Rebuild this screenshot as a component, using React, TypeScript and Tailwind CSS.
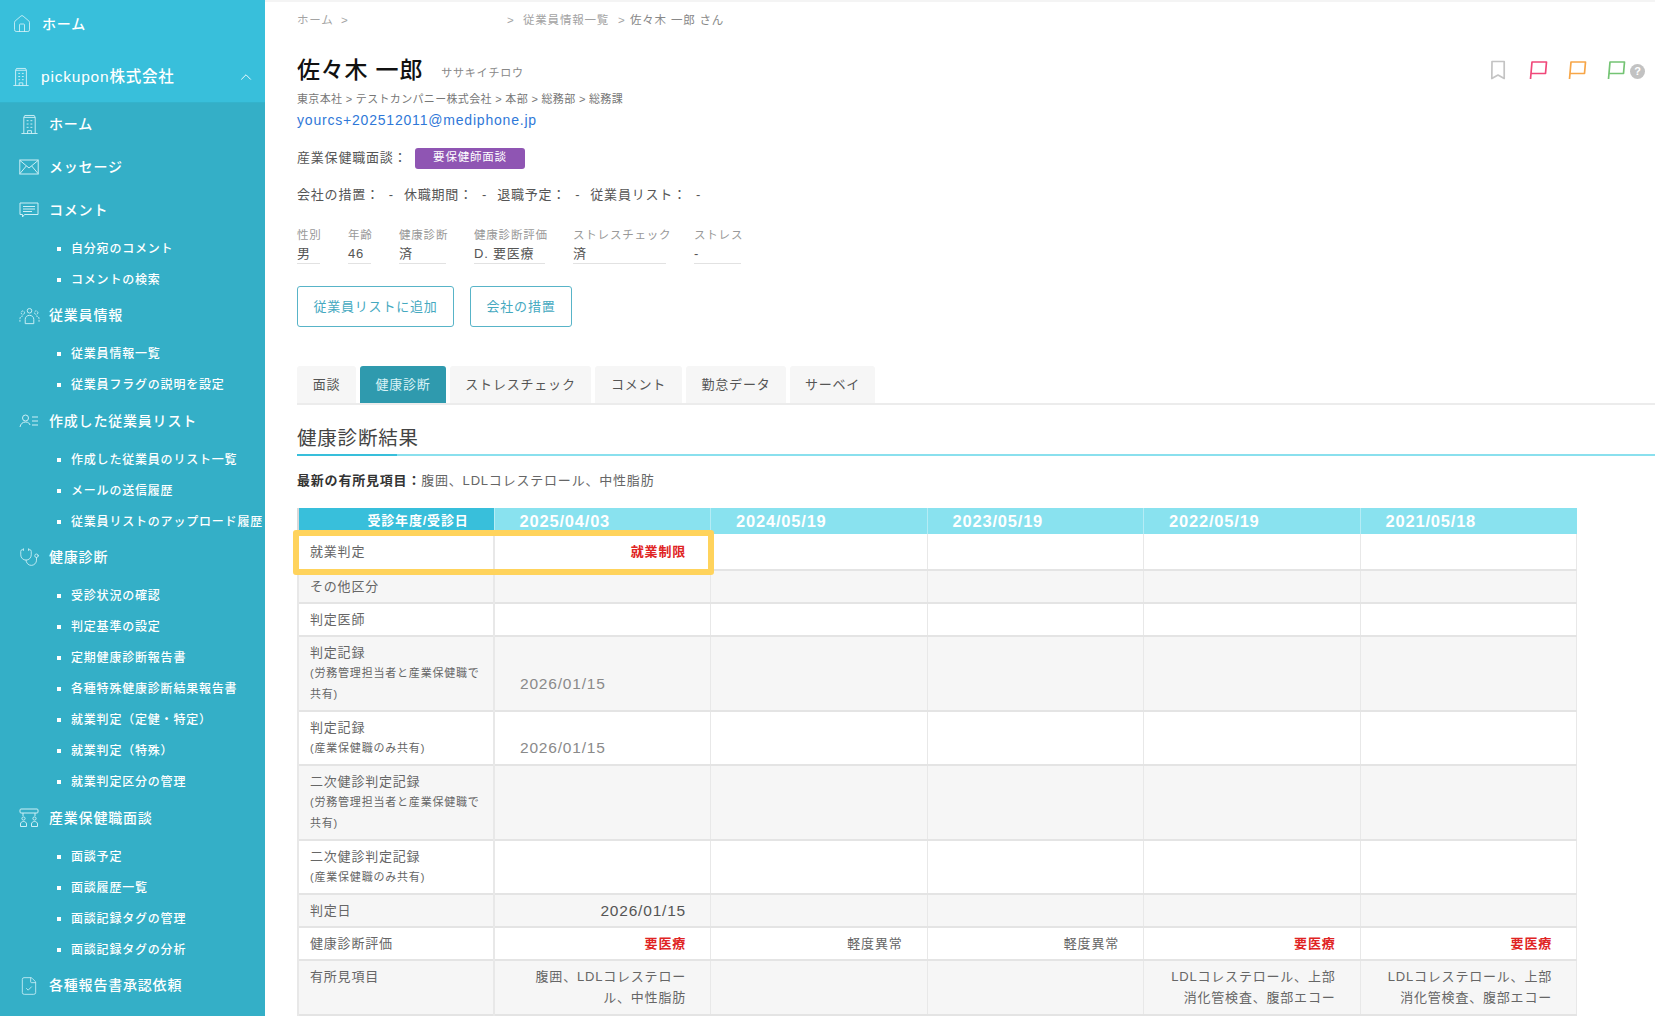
import type { ReactNode } from 'react';
import { ChevronUp, FileCheck, House, Stethoscope } from 'lucide-react';

type IconProps = { className?: string };

const BuildingIcon = ({ className }: IconProps) => (
  <svg viewBox="0 0 20 22" fill="none" stroke="currentColor" strokeWidth="1" className={className}>
    <path d="M4 20.5V3.5h12v17M1.5 20.5h17M4 3.5l1-2h10l1 2" />
    <path d="M7 7h2M11 7h2M7 10.5h2M11 10.5h2M7 14h2M11 14h2M8 20.5v-3h4v3" />
  </svg>
);

const MailIcon = ({ className }: IconProps) => (
  <svg viewBox="0 0 20 16" fill="none" stroke="currentColor" strokeWidth="1" className={className}>
    <rect x="0.8" y="1" width="18.4" height="14" />
    <path d="M1 1.5l9 7.5 9-7.5M1 14.5l6.3-7.5M19 14.5L12.7 7" />
  </svg>
);

const CommentIcon = ({ className }: IconProps) => (
  <svg viewBox="0 0 20 16" fill="none" stroke="currentColor" strokeWidth="1" className={className}>
    <path d="M1 1h18v11.5H5.5L3.5 15v-2.5H1z" />
    <path d="M4 4.5h12M4 7h12M4 9.5h9" />
  </svg>
);

const PeopleIcon = ({ className }: IconProps) => (
  <svg viewBox="0 0 22 18" fill="none" stroke="currentColor" strokeWidth="1" className={className}>
    <circle cx="11" cy="3.5" r="2.4" />
    <path d="M6.5 17v-4.5c0-2.5 2-4.2 4.5-4.2s4.500 1.700 4.500 4.200V17z" />
    <circle cx="4" cy="5.500" r="1.800" strokeDasharray="2 1" />
    <circle cx="18" cy="5.500" r="1.800" strokeDasharray="2 1" />
    <path d="M1 15v-3c0-1.800 1.200-3 3-3M21 15v-3c0-1.800-1.200-3-3-3" strokeDasharray="2 1" />
  </svg>
);

const ListUserIcon = ({ className }: IconProps) => (
  <svg viewBox="0 0 20 14" fill="none" stroke="currentColor" strokeWidth="1" className={className}>
    <circle cx="6.500" cy="4" r="3" />
    <path d="M1 13c.5-3 2.500-5 5.500-5s4 1.500 4.500 3" />
    <path d="M13 3h6M13 7h6M13 11h6" />
  </svg>
);

const InterviewIcon = ({ className }: IconProps) => (
  <svg viewBox="0 0 20 20" fill="none" stroke="currentColor" strokeWidth="1" className={className}>
    <rect x="1" y="1" width="18" height="4" rx="1" />
    <path d="M4 5v3M16 5v3" />
    <circle cx="4.500" cy="10.500" r="1.600" />
    <circle cx="15.500" cy="10.500" r="1.600" />
    <path d="M1.500 18.500v-2.500c0-1.500 1.300-2.500 3-2.500s3 1 3 2.500v2.500zM12.500 18.500v-2.500c0-1.500 1.300-2.500 3-2.500s3 1 3 2.500v2.500z" />
  </svg>
);

const BookmarkIcon = () => (
  <svg viewBox="0 0 16 20" fill="none" stroke="#c4c4c4" strokeWidth="1.700" className="w-[16px] h-[20px]">
    <path d="M2 1.500h12.200v17L8 15l-6.200 3.500z" strokeLinejoin="round" />
  </svg>
);

const FlagIcon = ({ color }: { color: string }) => (
  <svg viewBox="0 0 19 20" fill="none" stroke={color} strokeWidth="1.700" className="w-[19px] h-[20px]">
    <path d="M1.500 19L3 2h14.500l-1 11.500H2.200" strokeLinejoin="round" />
  </svg>
);

type NavGroup = {
  label: string;
  icon: ReactNode;
  subs?: string[];
};

const navGroups: NavGroup[] = [
  { label: 'ホーム', icon: <BuildingIcon className="w-[19px] h-[21px] ml-[1px]" /> },
  { label: 'メッセージ', icon: <MailIcon className="w-[20px] h-[16px]" /> },
  {
    label: 'コメント',
    icon: <CommentIcon className="w-[20px] h-[16px]" />,
    subs: ['自分宛のコメント', 'コメントの検索'],
  },
  {
    label: '従業員情報',
    icon: <PeopleIcon className="w-[21px] h-[18px]" />,
    subs: ['従業員情報一覧', '従業員フラグの説明を設定'],
  },
  {
    label: '作成した従業員リスト',
    icon: <ListUserIcon className="w-[20px] h-[14px]" />,
    subs: ['作成した従業員のリスト一覧', 'メールの送信履歴', '従業員リストのアップロード履歴'],
  },
  {
    label: '健康診断',
    icon: <Stethoscope className="w-[21px] h-[21px]" strokeWidth={1} />,
    subs: [
      '受診状況の確認',
      '判定基準の設定',
      '定期健康診断報告書',
      '各種特殊健康診断結果報告書',
      '就業判定（定健・特定）',
      '就業判定（特殊）',
      '就業判定区分の管理',
    ],
  },
  {
    label: '産業保健職面談',
    icon: <InterviewIcon className="w-[20px] h-[20px]" />,
    subs: ['面談予定', '面談履歴一覧', '面談記録タグの管理', '面談記録タグの分析'],
  },
  {
    label: '各種報告書承認依頼',
    icon: <FileCheck className="w-[20px] h-[22px]" strokeWidth={1} />,
  },
];

function Sidebar() {
  return (
    <aside className="w-[265px] shrink-0 h-full bg-[#34afc7] text-white overflow-hidden">
      <div className="h-[103px] bg-[#38bfdb] border-b border-[#33b3cc] px-[12px] text-[14px] font-medium">
        <div className="h-[48px] flex items-center gap-[10px]">
          <House className="w-[20px] h-[20px] text-[#d5f2f8]" strokeWidth={1} />
          <span>ホーム</span>
        </div>
        <div className="h-[54px] pt-[4px] flex items-center gap-[11px]">
          <BuildingIcon className="w-[18px] h-[20px] text-[#d5f2f8]" />
          <span className="text-[15.500px]">pickupon株式会社</span>
          <ChevronUp className="ml-auto mr-[-2px] w-[18px] h-[18px]" strokeWidth={1.2} />
        </div>
      </div>
      <nav className="pt-[3px] pl-[19px]">
        {navGroups.map((g) => (
          <div key={g.label} className={g.subs ? 'mb-[2.500px]' : 'mb-[7px]'}>
            <div className="h-[36px] flex items-center text-[14px] font-medium">
              <span className="w-[30px] shrink-0 text-[#cdeff6]">{g.icon}</span>
              <span>{g.label}</span>
            </div>
            {g.subs && (
              <ul className="pt-[5px]">
                {g.subs.map((s) => (
                  <li key={s} className="h-[31px] pl-[38px] flex items-center text-[12px] font-medium whitespace-nowrap">
                    <span className="w-[4px] h-[4px] bg-white mr-[10px] shrink-0" />
                    {s}
                  </li>
                ))}
              </ul>
            )}
          </div>
        ))}
      </nav>
    </aside>
  );
}

const stats = [
  { label: '性別', value: '男', w: 'w-[23px]' },
  { label: '年齢', value: '46', w: 'w-[23px]' },
  { label: '健康診断', value: '済', w: 'w-[47px]' },
  { label: '健康診断評価', value: 'D. 要医療', w: 'w-[71px]' },
  { label: 'ストレスチェック', value: '済', w: 'w-[93px]' },
  { label: 'ストレス', value: '-', w: 'w-[47px]' },
];

const tabs = [
  { label: '面談', w: 'w-[59px]' },
  { label: '健康診断', w: 'w-[86px]', active: true },
  { label: 'ストレスチェック', w: 'w-[141px]' },
  { label: 'コメント', w: 'w-[87px]' },
  { label: '勤怠データ', w: 'w-[100px]' },
  { label: 'サーベイ', w: 'w-[85px]' },
];

const measures = ['会社の措置', '休職期間', '退職予定', '従業員リスト'];

const dates = ['2025/04/03', '2024/05/19', '2023/05/19', '2022/05/19', '2021/05/18'];

type Row = {
  h: string;
  label: ReactNode;
  cells?: ReactNode[];
  shaded?: boolean;
  top?: boolean;
};

const small = 'block text-[11px] leading-[21px]';
const red = 'text-[#e02424] font-bold';

const rows: Row[] = [
  {
    h: 'h-[36px]',
    label: '就業判定',
    cells: [<span className={red}>就業制限</span>],
  },
  { h: 'h-[33px]', label: 'その他区分', shaded: true },
  { h: 'h-[33px]', label: '判定医師' },
  {
    h: 'h-[75px]',
    shaded: true,
    top: true,
    label: (
      <>
        判定記録
        <span className={small}>(労務管理担当者と産業保健職で<br />共有)</span>
      </>
    ),
    cells: [<span className="block text-left text-[15.500px] text-[#8a8a8a] pt-[31px]">2026/01/15</span>],
  },
  {
    h: 'h-[54px]',
    top: true,
    label: (
      <>
        判定記録
        <span className={small}>(産業保健職のみ共有)</span>
      </>
    ),
    cells: [<span className="block text-left text-[15.500px] text-[#8a8a8a] pt-[20px]">2026/01/15</span>],
  },
  {
    h: 'h-[75px]',
    shaded: true,
    top: true,
    label: (
      <>
        二次健診判定記録
        <span className={small}>(労務管理担当者と産業保健職で<br />共有)</span>
      </>
    ),
  },
  {
    h: 'h-[54px]',
    top: true,
    label: (
      <>
        二次健診判定記録
        <span className={small}>(産業保健職のみ共有)</span>
      </>
    ),
  },
  {
    h: 'h-[33px]',
    shaded: true,
    label: '判定日',
    cells: [<span className="text-[15.500px] text-[#555]">2026/01/15</span>],
  },
  {
    h: 'h-[33px]',
    label: '健康診断評価',
    cells: [
      <span className={red}>要医療</span>,
      '軽度異常',
      '軽度異常',
      <span className={red}>要医療</span>,
      <span className={red}>要医療</span>,
    ],
  },
  {
    h: 'h-[55px]',
    shaded: true,
    top: true,
    label: '有所見項目',
    cells: [
      <>腹囲、LDLコレステロー<br />ル、中性脂肪</>,
      '',
      '',
      <>LDLコレステロール、上部<br />消化管検査、腹部エコー</>,
      <>LDLコレステロール、上部<br />消化管検査、腹部エコー</>,
    ],
  },
];

function ResultTable() {
  return (
    <div className="relative mt-[16px] w-[1280px]">
      <table className="w-full table-fixed border-collapse text-[13px] text-[#666]">
        <colgroup>
          <col className="w-[196px]" />
          <col />
          <col />
          <col />
          <col />
          <col />
        </colgroup>
        <thead>
          <tr className="h-[26px]">
            <th className="bg-[#38bfdb] text-white text-[13px] font-bold text-right pr-[25px] border-l-2 border-[#d9d9d9]">
              受診年度/受診日
            </th>
            {dates.map((d) => (
              <th key={d} className="bg-[#89e2ef] text-white text-[16.500px] font-bold text-left pl-[25px] border-l border-[#b5ecf5]">
                {d}
              </th>
            ))}
          </tr>
        </thead>
        <tbody>
          {rows.map((r, i) => (
            <tr key={i} className={`${r.h} ${r.shaded ? 'bg-[#f6f6f6]' : 'bg-white'} border-b-2 border-[#e4e4e4]`}>
              <td className={`pl-[11px] border-l-2 border-r-2 border-[#e8e8e8] ${r.top ? 'align-top pt-[6px]' : ''}`}>
                {r.label}
              </td>
              {dates.map((d, c) => (
                <td
                  key={d}
                  className={`border-r border-[#e8e8e8] text-right text-[13px] leading-[21px] pr-[24px] pl-[25px] ${r.top ? 'align-top pt-[5px]' : ''}`}
                >
                  {r.cells?.[c]}
                </td>
              ))}
            </tr>
          ))}
        </tbody>
      </table>
      <div className="absolute left-[-4px] top-[22px] w-[421px] h-[45px] border-[6px] border-[#ffd35c] rounded-[3px]" />
    </div>
  );
}

function Main() {
  return (
    <main className="flex-1 min-w-0 h-full overflow-hidden border-t-2 border-[#f4f4f4] pl-[32px] text-[#555]">
      <div className="h-[38px] flex items-center text-[11.5px] text-[#a3a3a3] whitespace-nowrap">
        <span className="w-[44px]">ホーム</span>
        <span className="w-[166px]">&gt;</span>
        <span className="w-[16px]">&gt;</span>
        <span className="w-[95px]">従業員情報一覧</span>
        <span className="w-[12px]">&gt;</span>
        <span className="text-[#888]">佐々木 一郎 さん</span>
      </div>

      <div className="mt-[14px] h-[32px] flex items-center">
        <h1 className="text-[23px] text-[#111] font-medium">佐々木 一郎</h1>
        <span className="ml-[18px] mt-[6px] text-[11px] text-[#888]">ササキイチロウ</span>
        <div className="ml-auto flex items-center pr-[10px]">
          <BookmarkIcon />
          <span className="ml-[23px]"><FlagIcon color="#f0487a" /></span>
          <span className="ml-[20px]"><FlagIcon color="#f7a648" /></span>
          <span className="ml-[20px]"><FlagIcon color="#74c474" /></span>
          <span className="ml-[4px] mt-[2px] w-[15px] h-[15px] rounded-full bg-[#c2c2c2] text-white text-[11px] font-bold flex items-center justify-center tracking-normal">?</span>
        </div>
      </div>
      <div className="mt-[2px] h-[20px] pt-[2px] flex items-center text-[11px] tracking-[0.03em] text-[#777]">
        東京本社 &gt; テストカンパニー株式会社 &gt; 本部 &gt; 総務部 &gt; 総務課
      </div>
      <div className="mt-[1px] h-[22px] flex items-center text-[14px] text-[#2f78d8]">yourcs+202512011@mediphone.jp</div>

      <div className="mt-[16px] h-[22px] flex items-center text-[13px]">
        <span className="w-[118px]">産業保健職面談：</span>
        <span className="w-[110px] h-[21px] rounded-[3px] bg-[#8f55b3] text-white text-[11.5px] flex items-center justify-center">要保健師面談</span>
      </div>
      <div className="mt-[15px] h-[22px] flex items-center text-[13px] gap-[10px]">
        {measures.map((m) => (
          <span key={m} className="flex gap-[9px]">
            <span>{m}：</span>
            <span>-</span>
          </span>
        ))}
      </div>

      <div className="mt-[21px] flex gap-[28px]">
        {stats.map((s) => (
          <div key={s.label} className={`${s.w} whitespace-nowrap`}>
            <div className="h-[18px] flex items-center text-[11.5px] text-[#999]">{s.label}</div>
            <div className="h-[19px] flex items-center text-[13px] text-[#555] border-b border-[#e2e2e2]">{s.value}</div>
          </div>
        ))}
      </div>

      <div className="mt-[22px] flex gap-[16px] text-[13px] text-[#45a9bf]">
        <button className="w-[157px] h-[41px] border border-[#58b4c8] rounded-[3px]">従業員リストに追加</button>
        <button className="w-[102px] h-[41px] border border-[#58b4c8] rounded-[3px]">会社の措置</button>
      </div>

      <div className="mt-[39px] flex gap-[4px] border-b-2 border-[#ececec] text-[13px]">
        {tabs.map((t) => (
          <div
            key={t.label}
            className={`${t.w} h-[37px] flex items-center justify-center rounded-t-[3px] ${t.active ? 'bg-[#2f9aae] text-[#d9f3f7]' : 'bg-[#f6f6f6] text-[#555]'}`}
          >
            {t.label}
          </div>
        ))}
      </div>

      <h2 className="mt-[16px] h-[33px] pt-[3px] flex items-center text-[19.500px] font-normal text-[#444]">健康診断結果</h2>
      <div className="flex h-[2px] bg-[#8ae0ee]">
        <div className="w-[100px] bg-[#38bfdb]" />
      </div>

      <div className="mt-[14px] h-[22px] flex items-center text-[13px] text-[#666]">
        <b className="text-[#333] font-bold">最新の有所見項目：</b>腹囲、LDLコレステロール、中性脂肪
      </div>

      <ResultTable />
    </main>
  );
}

export default function App() {
  return (
    <div className="flex w-[1655px] h-[1016px] overflow-hidden bg-white tracking-[0.05em] font-['Liberation_Sans','Noto_Sans_CJK_JP',sans-serif]">
      <Sidebar />
      <Main />
    </div>
  );
}
